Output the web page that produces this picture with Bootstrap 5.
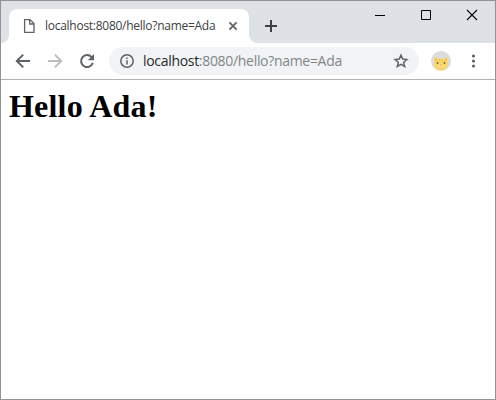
<!DOCTYPE html>
<html lang="en">
<head>
<meta charset="utf-8">
<title>localhost:8080/hello?name=Ada</title>
<link href="https://cdn.jsdelivr.net/npm/bootstrap@5.3.0/dist/css/bootstrap.min.css" rel="stylesheet">
<style>
body { font-family: "Open Sans", "Noto Sans", sans-serif; }
.window { height: 400px; border: 1px solid #939393; }
.strip { height: 42px; background: #dee1e6; padding-left: 8px; }
.tab { width: 240px; height: 34px; border-radius: 8px 8px 0 0; padding: 0 9px 0 12px; }
.tab::before, .tab::after { content: ""; position: absolute; bottom: 0; width: 8px; height: 8px; }
.tab::before { left: -8px; background: radial-gradient(circle at 0 0, transparent 7.5px, #fff 8.2px); }
.tab::after { right: -8px; background: radial-gradient(circle at 100% 0, transparent 7.5px, #fff 8.2px); }
.tab-title { font-size: 12px; line-height: 16px; color: #3c4043; margin-left: 8px; white-space: nowrap; letter-spacing: -.27px; }
.new-tab { width: 16px; height: 34px; margin-left: 14px; }
.control { width: 46px; height: 28px; }
.toolbar { height: 37px; border-bottom: 1px solid #b2b2b2; padding-left: 6px; }
.tool { width: 32px; height: 32px; }
.address { width: 310px; height: 28px; background: #f1f3f4; margin-left: 6px; padding: 0 10px; }
.url { font-size: 14px; line-height: 20px; color: #80868b; margin-left: 8px; white-space: nowrap; letter-spacing: -.31px; }
.url span { color: #27292d; }
.avatar { margin-left: 12px; }
.more { margin-left: 14px; }
.greeting { font: bold 32px/37px "Liberation Serif", serif; color: #000; padding: 8px 8px 0; letter-spacing: .2px; }
svg { display: block; flex: none; }
</style>
<script src="https://cdn.jsdelivr.net/npm/bootstrap@5.3.0/dist/js/bootstrap.bundle.min.js"></script>
</head>
<body class="overflow-hidden bg-white">
<div class="window d-flex flex-column">
  <header class="strip d-flex">
    <div class="tab bg-white position-relative d-flex align-items-center align-self-end">
      <svg width="16" height="16" fill="none" stroke="#5f6368" stroke-width="1.3"><path d="M3.6 1.6H9L13 5.6V14.4H3.6ZM8.7 1.8V6H12.8"/></svg>
      <div class="tab-title">localhost:8080/hello?name=Ada</div>
      <svg class="ms-auto" width="14" height="14" stroke="#5f6368" stroke-width="1.8"><path d="M3.4 3.4l7.2 7.2M10.6 3.4l-7.2 7.2"/></svg>
    </div>
    <div class="new-tab d-flex align-items-center align-self-end">
      <svg width="16" height="16" stroke="#3c4043" stroke-width="2"><path d="M2 8h12M8 2v12"/></svg>
    </div>
    <div class="d-flex ms-auto">
      <div class="control d-flex align-items-center justify-content-center"><svg width="12" height="12" stroke="#000"><path d="M1 6.5h10"/></svg></div>
      <div class="control d-flex align-items-center justify-content-center"><svg width="12" height="12" stroke="#000" fill="none"><path d="M1.5 1.5h9v9h-9z"/></svg></div>
      <div class="control d-flex align-items-center justify-content-center"><svg width="12" height="12" stroke="#000" stroke-width="1.1"><path d="M1 1l10 10M11 1L1 11"/></svg></div>
    </div>
  </header>
  <nav class="toolbar d-flex align-items-center bg-white">
    <div class="tool d-flex align-items-center justify-content-center"><svg width="16" height="16" fill="none" stroke="#5f6368" stroke-width="2"><path d="M15 8H2.4M8.2 1.6L1.8 8l6.4 6.4"/></svg></div>
    <div class="tool d-flex align-items-center justify-content-center"><svg width="16" height="16" fill="none" stroke="#bcbec0" stroke-width="2"><path d="M1 8h12.6M7.8 1.6L14.2 8l-6.4 6.4"/></svg></div>
    <div class="tool d-flex align-items-center justify-content-center"><svg width="16" height="16" fill="none" stroke="#5f6368" stroke-width="2"><path d="M12.6 4.1A6 6 0 1 0 13.8 9.8"/><path d="M15 1v6.2H8.8z" fill="#5f6368" stroke="none"/></svg></div>
    <div class="address rounded-pill d-flex align-items-center">
      <svg width="16" height="16" fill="none" stroke="#5f6368" stroke-width="1.5"><circle cx="8" cy="8" r="6.2"/><path d="M8 7.3v4.2M8 4.6v1.5"/></svg>
      <div class="url"><span>localhost</span>:8080/hello?name=Ada</div>
      <svg class="ms-auto" width="16" height="16" fill="none" stroke="#5f6368" stroke-width="1.5"><path d="M8 2.2L9.7 6.1L13.9 6.5L10.7 9.3L11.7 13.5L8 11.3L4.3 13.5L5.3 9.3L2.1 6.5L6.3 6.1Z"/></svg>
    </div>
    <svg class="avatar" width="20" height="20">
      <circle cx="10" cy="10" r="10" fill="#dadcde"/>
      <path d="M4 5.5L7.2 8Q10 7.2 12.8 8L16 5.5Q17.5 10 16.8 14Q15.5 19.2 10 19.6Q4.5 19.2 3.2 14Q2.5 10 4 5.5Z" fill="#fbd568"/>
      <path d="M4.6 7L6.5 8.7L4.2 10ZM15.4 7L13.5 8.7L15.8 10Z" fill="#f3b84b"/>
      <path d="M8.7 7.8v2.5M11.3 7.8v2.5" stroke="#efbd51"/>
      <circle cx="6.5" cy="12" r=".9" fill="#6e5a38"/><circle cx="13.5" cy="12" r=".9" fill="#6e5a38"/>
      <ellipse cx="10" cy="15" rx="3" ry="1.6" fill="#fee18a"/>
      <path d="M9 13.8h2l-1 1.2z" fill="#c58a4c"/>
    </svg>
    <svg class="more" width="16" height="16" fill="#5f6368"><circle cx="8.5" cy="3" r="1.6"/><circle cx="8.5" cy="8" r="1.6"/><circle cx="8.5" cy="13" r="1.6"/></svg>
  </nav>
  <main class="flex-grow-1 bg-white"><h1 class="greeting m-0">Hello Ada!</h1></main>
</div>
</body>
</html>
